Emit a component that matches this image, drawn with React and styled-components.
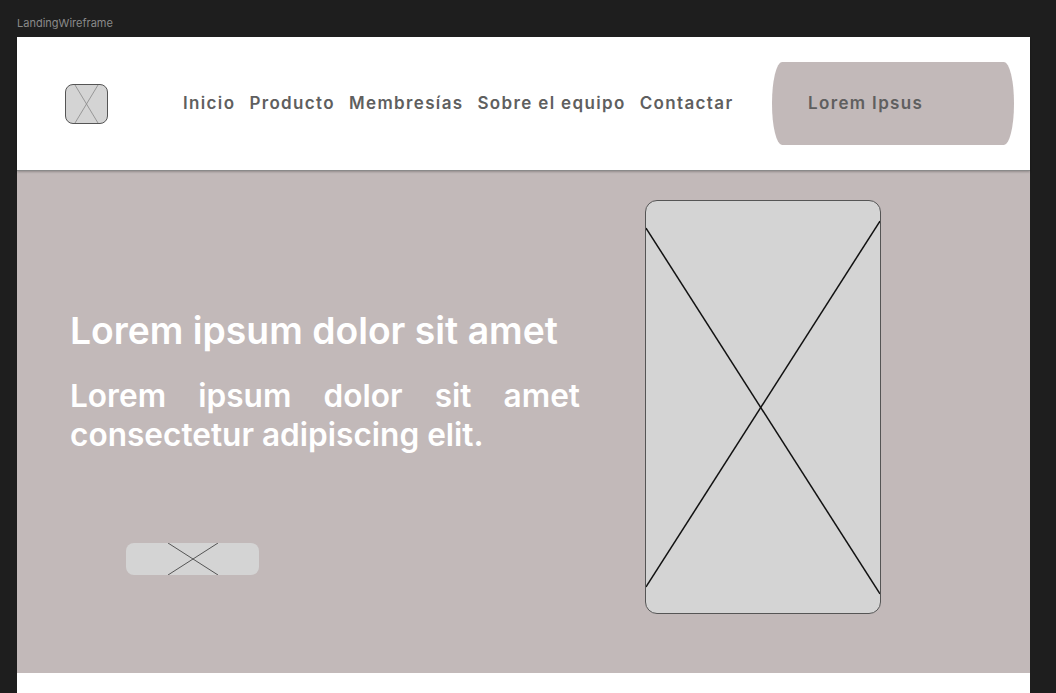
import React from "react";
import styled, { createGlobalStyle } from "styled-components";

const GlobalStyle = createGlobalStyle`
  body {
    margin: 0;
    background: #1e1e1e;
    font-family: Inter, "Noto Sans", sans-serif;
  }
`;

const nav_items = ["Inicio", "Producto", "Membresías", "Sobre el equipo", "Contactar"];

const Canvas = styled.div`
  width: 1056px;
  height: 693px;
  overflow: hidden;
  padding-left: 17px;
  box-sizing: border-box;
`;

const Label = styled.div`
  height: 37px;
  box-sizing: border-box;
  padding-top: 17px;
  font-size: 11px;
  line-height: 13px;
  color: #8a8a8a;
`;

const Frame = styled.div`
  width: 1013px;
  background: white;
`;

const Header = styled.header`
  height: 133px;
  display: flex;
  align-items: center;
  padding: 0 16px 0 48px;
  position: relative;
  z-index: 1;
  box-shadow: 0 1px 0 #8a8a8a, 0 2px 2px rgba(0, 0, 0, 0.25);
`;

const Logo = styled.div`
  width: 41px;
  height: 38px;
  border: 1.5px solid #555;
  border-radius: 8px;
  background: #d4d4d4;
  overflow: hidden;
  display: flex;

  svg {
    width: 100%;
    height: 100%;
  }
`;

const Nav = styled.nav`
  display: flex;
  gap: 14px;
  margin: 0 0 2px 75px;
`;

const NavItem = styled.span`
  font-size: 17px;
  font-weight: 600;
  letter-spacing: 1.35px;
  color: #5f5f5f;
`;

const CtaButton = styled.button`
  margin-left: auto;
  width: 242px;
  height: 83px;
  border: none;
  background: #c2b9b9;
  border-radius: 10px / 50%;
  text-align: left;
  padding: 0 0 2px 36px;
  font-family: inherit;
  font-size: 17px;
  font-weight: 600;
  letter-spacing: 1.35px;
  color: #5f5f5f;
`;

const Hero = styled.section`
  height: 503px;
  background: #c2b9b9;
  display: flex;
`;

const HeroText = styled.div`
  width: 575px;
  padding: 139px 0 0 53px;
  display: flex;
  flex-direction: column;
`;

const Title = styled.h1`
  margin: 0;
  font-size: 37.3px;
  line-height: 44px;
  font-weight: 600;
  color: white;
`;

const Lead = styled.p`
  margin: 23px 0 0;
  width: 510px;
  font-size: 31.6px;
  line-height: 39px;
  font-weight: 600;
  color: white;
  text-align: justify;
`;

const SmallPlaceholder = styled.div`
  margin: 89px 0 0 56px;
  width: 133px;
  height: 32px;
  border-radius: 8px;
  background: #d4d4d4;
  display: flex;
  justify-content: center;

  svg {
    width: 50px;
    height: 32px;
  }
`;

const ImagePlaceholder = styled.div`
  margin-top: 30px;
  width: 236px;
  height: 414px;
  box-sizing: border-box;
  border: 1.5px solid #555;
  border-radius: 12px;
  background: #d4d4d4;
  overflow: hidden;
  display: flex;

  svg {
    width: 100%;
    height: 100%;
  }
`;

const Footer = styled.div`
  height: 20px;
  background: white;
`;

const Cross = ({ w, h, color, width, inset = [0, 0, 0, 0] }) => (
  <svg viewBox={`0 0 ${w} ${h}`} preserveAspectRatio="none">
    <line x1={0} y1={inset[0]} x2={w} y2={h - inset[1]} stroke={color} strokeWidth={width} />
    <line x1={w} y1={inset[2]} x2={0} y2={h - inset[3]} stroke={color} strokeWidth={width} />
  </svg>
);

const App = () => {
  return (
    <Canvas>
      <GlobalStyle />
      <Label>LandingWireframe</Label>
      <Frame>
        <Header>
          <Logo>
            <svg viewBox="0 0 41 38">
              <line x1="9" y1="0" x2="32" y2="38" stroke="#888" strokeWidth="0.8" />
              <line x1="32" y1="0" x2="9" y2="38" stroke="#888" strokeWidth="0.8" />
            </svg>
          </Logo>
          <Nav>
            {nav_items.map((item) => (
              <NavItem key={item}>{item}</NavItem>
            ))}
          </Nav>
          <CtaButton>Lorem Ipsus</CtaButton>
        </Header>
        <Hero>
          <HeroText>
            <Title>Lorem ipsum dolor sit amet</Title>
            <Lead>Lorem ipsum dolor sit amet consectetur adipiscing elit.</Lead>
            <SmallPlaceholder>
              <Cross w={50} h={32} color="#555" width={1} />
            </SmallPlaceholder>
          </HeroText>
          <ImagePlaceholder>
            <Cross w={233} h={411} color="#111" width={1.5} inset={[27, 19, 20, 26]} />
          </ImagePlaceholder>
        </Hero>
        <Footer />
      </Frame>
    </Canvas>
  );
};

export default App;
